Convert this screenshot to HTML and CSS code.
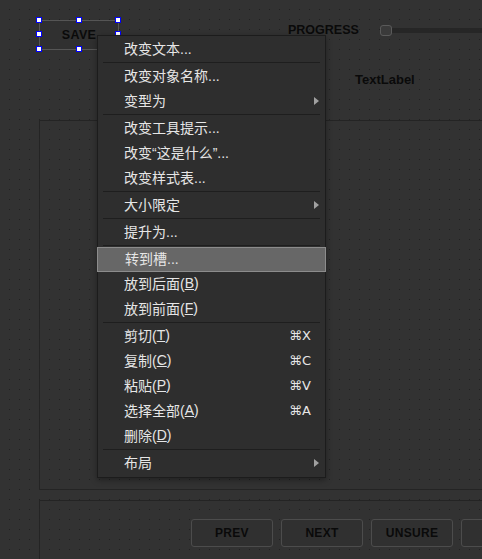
FILE: index.html
```html
<!DOCTYPE html>
<html lang="zh-CN">
<head>
  <meta charset="UTF-8" />
  <meta name="viewport" content="width=device-width, initial-scale=1.0" />
  <title>Form Designer</title>
  <link rel="stylesheet" href="styles.css">
</head>
<body>
  <div class="form">
    <div class="top-row">
      <div class="save-wrap">
        <button class="btn save">SAVE</button>
        <span class="handle h-tl"></span>
        <span class="handle h-tm"></span>
        <span class="handle h-tr"></span>
        <span class="handle h-ml"></span>
        <span class="handle h-mr"></span>
        <span class="handle h-bl"></span>
        <span class="handle h-bm"></span>
      </div>
      <div class="progress-label">PROGRESS</div>
      <div class="slider">
        <span class="slider-knob"></span>
        <span class="slider-groove"></span>
      </div>
    </div>

    <div class="text-label">TextLabel</div>

    <div class="frame frame-main"></div>

    <div class="frame frame-nav">
      <button class="btn nav">PREV</button>
      <button class="btn nav">NEXT</button>
      <button class="btn nav">UNSURE</button>
      <button class="btn nav">SKIP</button>
    </div>
  </div>

  <ul class="menu">
    <li class="item">改变文本...</li>
    <li class="sep"></li>
    <li class="item">改变对象名称...</li>
    <li class="item sub">变型为</li>
    <li class="sep"></li>
    <li class="item">改变工具提示...</li>
    <li class="item">改变“这是什么”...</li>
    <li class="item">改变样式表...</li>
    <li class="sep"></li>
    <li class="item sub">大小限定</li>
    <li class="sep"></li>
    <li class="item">提升为...</li>
    <li class="sep"></li>
    <li class="item active">转到槽...</li>
    <li class="item">放到后面(<u>B</u>)</li>
    <li class="item">放到前面(<u>F</u>)</li>
    <li class="sep"></li>
    <li class="item">剪切(<u>T</u>)<span class="key">⌘X</span></li>
    <li class="item">复制(<u>C</u>)<span class="key">⌘C</span></li>
    <li class="item">粘贴(<u>P</u>)<span class="key">⌘V</span></li>
    <li class="item">选择全部(<u>A</u>)<span class="key">⌘A</span></li>
    <li class="item">删除(<u>D</u>)</li>
    <li class="sep"></li>
    <li class="item sub">布局</li>
  </ul>
</body>
</html>
```

FILE: styles.css
```css
* {
  box-sizing: border-box;
  font-family: "Liberation Sans", "Noto Sans CJK SC", sans-serif;
}

body {
  margin: 0;
  width: 482px;
  height: 559px;
  overflow: hidden;
  position: relative;
  background-color: #202020;
  background-image:
    linear-gradient(to right, transparent 1px, #323232 1px),
    linear-gradient(to bottom, transparent 1px, #323232 1px);
  background-size: 10px 10px;
  background-position: 9px 9px;
}

.form {
  padding: 20px 0 0 39px;
}

.top-row {
  display: flex;
  align-items: flex-start;
  height: 30px;
}

.save-wrap {
  position: relative;
  width: 80px;
  height: 30px;
}

.btn {
  background: #303030;
  border: 1px solid #4c4c4c;
  border-radius: 3px;
  color: #0a0a0a;
  font-weight: bold;
  font-size: 12px;
  padding: 0;
  letter-spacing: 0.3px;
}

.save {
  width: 80px;
  height: 30px;
  border-radius: 1px;
  border-color: #555;
  font-size: 12.5px;
}

.handle {
  position: absolute;
  width: 6px;
  height: 6px;
  background: #fff;
  border: 1px solid #0000ff;
}

.h-tl { left: -3px; top: -3px; }
.h-tm { left: 37px; top: -3px; }
.h-tr { left: 76px; top: -3px; }
.h-ml { left: -3px; top: 11px; }
.h-mr { left: 76px; top: 11px; }
.h-bl { left: -3px; top: 26px; }
.h-bm { left: 37px; top: 26px; }

.progress-label {
  margin-left: 169px;
  margin-top: 3px;
  font-size: 12.5px;
  font-weight: bold;
  color: #0a0a0a;
}

.slider {
  flex: 1;
  display: flex;
  align-items: center;
  margin-left: 21px;
  margin-top: 5px;
}

.slider-knob {
  width: 12px;
  height: 11px;
  border: 1px solid #5a5a5a;
  border-radius: 3px;
  background: #3a3a3a;
}

.slider-groove {
  flex: 1;
  height: 5px;
  background: #262626;
}

.text-label {
  margin-top: 22px;
  padding-left: 316px;
  font-size: 13px;
  font-weight: bold;
  color: #0a0a0a;
  line-height: 16px;
}

.frame {
  border: 1px solid #242424;
  width: 480px;
}

.frame-main {
  margin-top: 32px;
  height: 370px;
}

.frame-nav {
  margin-top: 10px;
  height: 80px;
  display: flex;
  gap: 8px;
  padding: 18px 0 0 151px;
}

.nav {
  flex: none;
  width: 82px;
  height: 28px;
}

.menu {
  position: absolute;
  left: 97px;
  top: 35px;
  width: 229px;
  margin: 0;
  padding: 1px 0;
  list-style: none;
  background: #2e2e2e;
  border: 1px solid #1c1c1c;
  box-shadow: 0 2px 6px rgba(0, 0, 0, 0.35);
}

.item {
  position: relative;
  display: flex;
  align-items: center;
  height: 25px;
  padding: 0 14px 3px 26px;
  color: #e6e6e6;
  font-size: 14px;
}

.item u {
  text-underline-offset: 1px;
}

.item.active {
  margin: 0 -1px;
  padding-left: 27px;
  background: #676767;
  border: 1px solid #8c8c8c;
}

.key {
  margin-left: auto;
  font-size: 13px;
  font-family: "DejaVu Sans", "Liberation Sans", sans-serif;
}

.sub::after {
  content: "";
  position: absolute;
  right: 6px;
  top: 8px;
  border-left: 5px solid #a0a0a0;
  border-top: 4px solid transparent;
  border-bottom: 4px solid transparent;
}

.sep {
  height: 2px;
  margin: 0 5px;
  border-top: 1px solid #1e1e1e;
}
```
